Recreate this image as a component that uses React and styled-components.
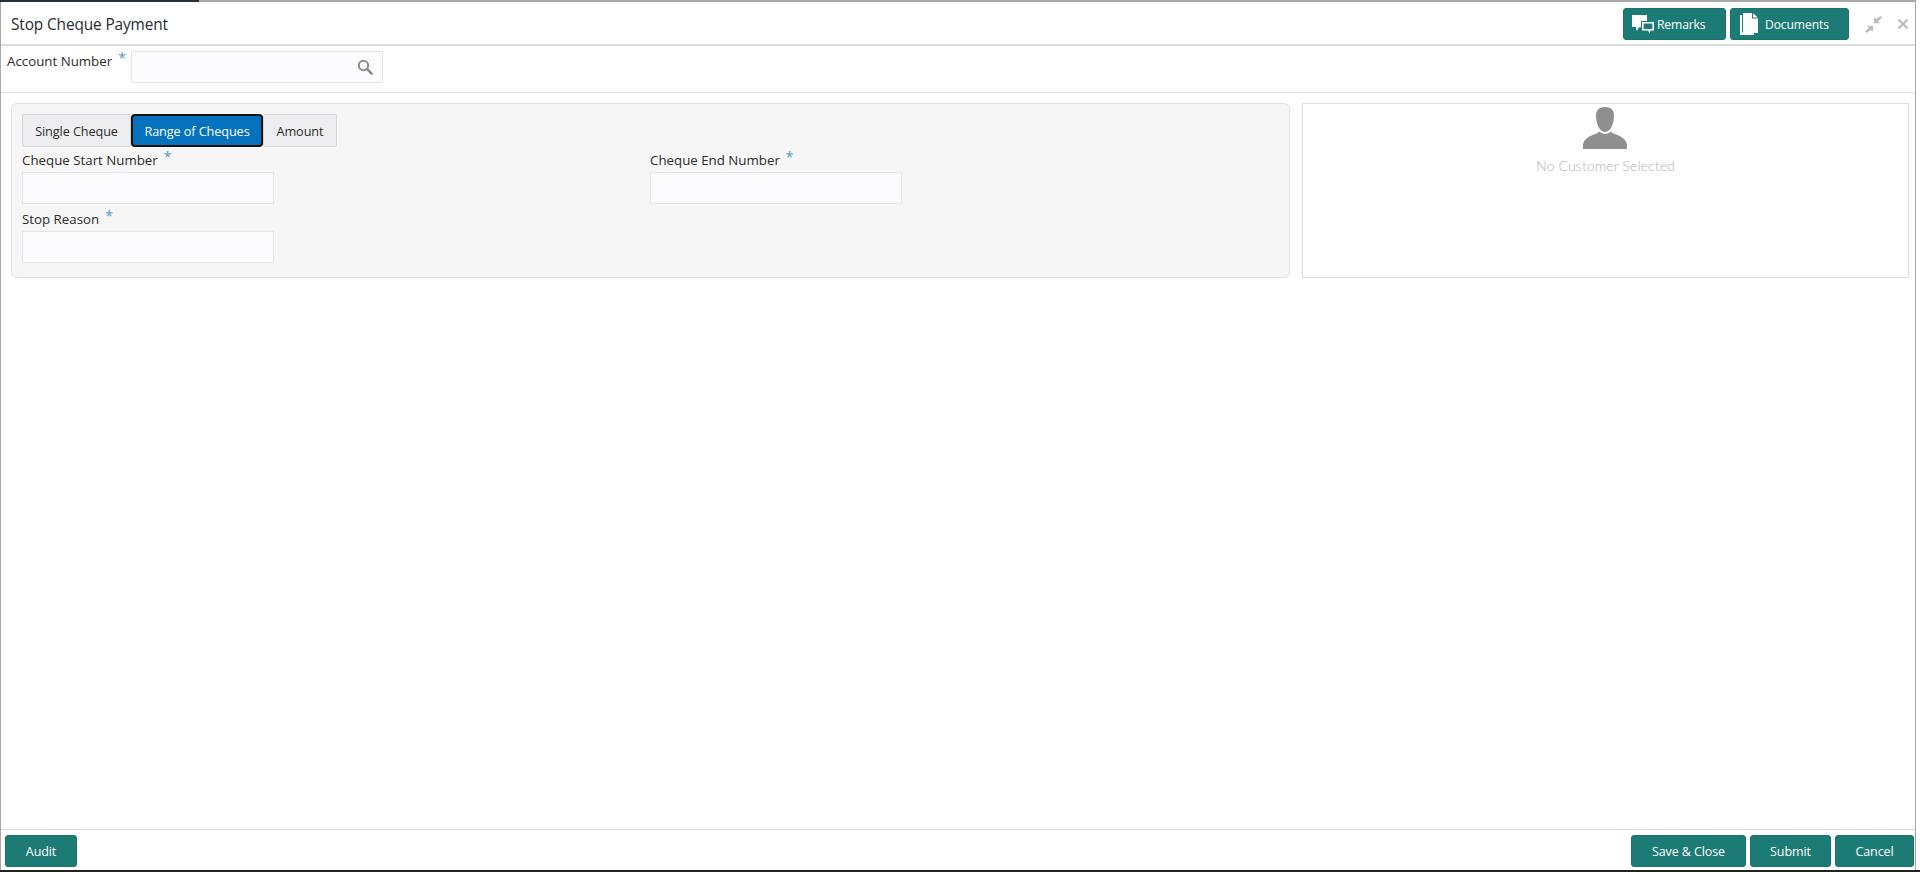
import React from "react";
import styled, { createGlobalStyle } from "styled-components";

const Global = createGlobalStyle`
  html, body { margin: 0; padding: 0; background: #fff; }
  body { font-family: "Open Sans", "Liberation Sans", sans-serif; color: #2c2c2c; overflow: hidden; }
  * { box-sizing: border-box; }
`;

const Screen = styled.div`
  width: 1920px;
  height: 872px;
  background: #fff;
  border-bottom: 2px solid #222;
`;

const Frame = styled.div`
  position: relative;
  width: 1916px;
  height: 870px;
  display: flex;
  flex-direction: column;
  border-top: 2px solid #a8a8a8;
  border-left: 1px solid #a8a8a8;
  border-right: 1px solid #a8a8a8;
  background: #fff;
`;

const LoadBar = styled.div`
  position: absolute;
  top: -2px;
  left: -1px;
  width: 199px;
  height: 2px;
  background: #26303a;
`;

const Header = styled.header`
  height: 44px;
  flex: none;
  display: flex;
  align-items: center;
  padding: 2px 7px 0 10px;
  border-bottom: 2px solid #dcdcdc;
`;

const Title = styled.h1`
  margin: 0;
  padding-top: 1px;
  flex: 1;
  font-size: 15.4px;
  font-weight: 400;
  letter-spacing: -0.12px;
  color: #2b2b2b;
`;

const TealButton = styled.button`
  height: 32px;
  width: ${(p) => p.$w}px;
  margin-left: ${(p) => p.$ml || 0}px;
  display: flex;
  align-items: center;
  justify-content: ${(p) => (p.$icon ? "flex-start" : "center")};
  gap: ${(p) => p.$gap || 0}px;
  padding: 0 0 0 ${(p) => p.$pl || 0}px;
  background: #1d7b76;
  color: #fff;
  border: 1px solid #1b716d;
  border-radius: 3px;
  font-family: inherit;
  font-size: ${(p) => (p.$icon ? 12.1 : 12.5)}px;
  letter-spacing: -0.1px;
`;

const WindowIcons = styled.div`
  display: flex;
  align-items: center;
  gap: 16px;
  margin-left: 16px;
  color: #bdbdbd;
`;

const AccountRow = styled.div`
  height: 47px;
  flex: none;
  display: flex;
  align-items: flex-start;
  padding: 5px 0 0 6px;
  border-bottom: 1px solid #e2e2e2;
`;

const Label = styled.label`
  display: block;
  font-size: 13.3px;
  line-height: 18px;
  color: #2c2c2c;
  white-space: nowrap;
`;

const Star = styled.sup`
  color: #4e9ac2;
  font-size: 14px;
  line-height: 0;
  margin-left: 6px;
  vertical-align: 3px;
`;

const InputBox = styled.div`
  width: 252px;
  height: 32px;
  flex: none;
  display: flex;
  align-items: center;
  justify-content: flex-end;
  padding-right: 9px;
  background: #fbfbfd;
  border: 1px solid #e4e4e4;
  border-radius: 1px;
  color: #8c8c8c;
`;

const AccountLabel = styled(Label)`
  width: 124px;
  padding-top: 1px;
`;

const Content = styled.main`
  flex: 1;
  display: flex;
  align-items: flex-start;
  gap: 12px;
  padding: 10px 0 0 10px;
`;

const FormPanel = styled.section`
  width: 1279px;
  height: 175px;
  padding: 10px 10px 0;
  background: #f6f6f7;
  border: 1px solid #e0e0e0;
  border-radius: 6px;
`;

const Tabs = styled.div`
  display: flex;
  width: max-content;
  height: 33px;
`;

const Tab = styled.button`
  width: ${(p) => p.$w}px;
  height: 33px;
  padding: 0;
  font-family: inherit;
  font-size: 12.7px;
  color: ${(p) => (p.$active ? "#fff" : "#2c2c2c")};
  background: ${(p) => (p.$active ? "#0572c0" : "#eeeef0")};
  border: ${(p) => (p.$active ? "2px solid #111" : "1px solid #d6d6d6")};
  border-radius: ${(p) => (p.$active ? "4px" : "2px")};
  letter-spacing: -0.1px;
`;

const FieldGrid = styled.div`
  display: grid;
  grid-template-columns: 628px 252px;
  grid-auto-rows: 59px;
  margin-top: 4px;
`;

const Field = styled.div`
  height: 59px;
  display: flex;
  flex-direction: column;
  gap: 3px;
`;

const ProfilePanel = styled.aside`
  width: 607px;
  height: 175px;
  display: flex;
  flex-direction: column;
  align-items: center;
  padding-top: 3px;
  background: #fff;
  border: 1px solid #dedede;
`;

const PersonSlot = styled.div`
  display: flex;
  margin-right: 2px;
`;

const ProfileText = styled.div`
  margin-top: 8px;
  font-family: Lato, "Open Sans", sans-serif;
  font-weight: 300;
  font-size: 14.3px;
  line-height: 18px;
  color: #b4b4b4;
`;

const Footer = styled.footer`
  height: 41px;
  flex: none;
  display: flex;
  align-items: flex-start;
  padding: 5px 1px 0 4px;
  border-top: 1px solid #d8d8d8;
`;

const Spacer = styled.div`
  flex: 1;
`;

const Search = () => (
  <svg width="16" height="16" viewBox="0 0 16 16" fill="none" stroke="currentColor" strokeWidth="2" strokeLinecap="round">
    <circle cx="6.5" cy="6.5" r="4.7" />
    <path d="M10.2 10.2 14.6 14.6" strokeWidth="2.6" />
  </svg>
);

const ChatIcon = () => (
  <svg width="22" height="19" viewBox="0 0 22 19" fill="#fff">
    <path d="M0 0h15v6H9v6.200H7L4.800 16 3.800 12H0z" />
    <path fillRule="evenodd" d="M10 7h12v8.500h-3.500L17.300 19l-1-3.500H10zm1.600 1.600v5.300h8.800V8.600z" />
  </svg>
);

const DocIcon = () => (
  <svg width="18" height="22" viewBox="0 0 18 22" fill="#fff">
    <path d="M0 2h2v17.500h12V22H1a1 1 0 0 1-1-1z" />
    <path d="M3 0h9v5.500h6V20H3z" />
    <path d="M13 0.300 17.700 4.500H13z" />
  </svg>
);

const Collapse = () => (
  <svg width="17" height="17" viewBox="0 0 17 17" fill="currentColor">
    <path d="M15.500 0 17 1.500l-3.800 3.800 1.800 1.900H9V1.200l2 1.900z" />
    <path d="M1.500 17 0 15.500l3.800-3.800L2 9.800h6v6l-2-1.900z" />
  </svg>
);

const CloseX = () => (
  <svg width="10" height="10" viewBox="0 0 10 10" stroke="currentColor" strokeWidth="2.200">
    <path d="M0.500 0.500 9.500 9.500M9.500 0.500 0.500 9.500" />
  </svg>
);

const Person = () => (
  <svg width="44" height="42" viewBox="0 0 44 42" fill="#8f8f8f">
    <path d="M22 0c6 0 9 3 9 8.500 0 7-3 16.500-9 16.500S13 15.500 13 8.500C13 3 16 0 22 0z" />
    <path d="M16 24.500c2 1.500 4 2.500 6 2.500s4-1 6-2.500c1 1.500 2 2 5 3 6 2 10 5 11 10V42H0v-4.500c1-5 5-8 11-10 3-1 4-1.500 5-3z" />
  </svg>
);

const Req = ({ children }) => (
  <>
    {children}
    <Star>*</Star>
  </>
);

export default function App() {
  return (
    <Screen>
      <Global />
      <Frame>
        <LoadBar />
        <Header>
          <Title>Stop Cheque Payment</Title>
          <TealButton $w={103} $icon $pl={8} $gap={3}>
            <ChatIcon />
            Remarks
          </TealButton>
          <TealButton $w={119} $ml={4} $icon $pl={9} $gap={7}>
            <DocIcon />
            Documents
          </TealButton>
          <WindowIcons>
            <Collapse />
            <CloseX />
          </WindowIcons>
        </Header>
        <AccountRow>
          <AccountLabel>
            <Req>Account Number</Req>
          </AccountLabel>
          <InputBox>
            <Search />
          </InputBox>
        </AccountRow>
        <Content>
          <FormPanel>
            <Tabs>
              <Tab $w={109}>Single Cheque</Tab>
              <Tab $w={132} $active>Range of Cheques</Tab>
              <Tab $w={74}>Amount</Tab>
            </Tabs>
            <FieldGrid>
              <Field>
                <Label><Req>Cheque Start Number</Req></Label>
                <InputBox />
              </Field>
              <Field>
                <Label><Req>Cheque End Number</Req></Label>
                <InputBox />
              </Field>
              <Field>
                <Label><Req>Stop Reason</Req></Label>
                <InputBox />
              </Field>
            </FieldGrid>
          </FormPanel>
          <ProfilePanel>
            <PersonSlot>
              <Person />
            </PersonSlot>
            <ProfileText>No Customer Selected</ProfileText>
          </ProfilePanel>
        </Content>
        <Footer>
          <TealButton $w={72}>Audit</TealButton>
          <Spacer />
          <TealButton $w={115}>Save &amp; Close</TealButton>
          <TealButton $w={81} $ml={4}>Submit</TealButton>
          <TealButton $w={79} $ml={4}>Cancel</TealButton>
        </Footer>
      </Frame>
    </Screen>
  );
}
